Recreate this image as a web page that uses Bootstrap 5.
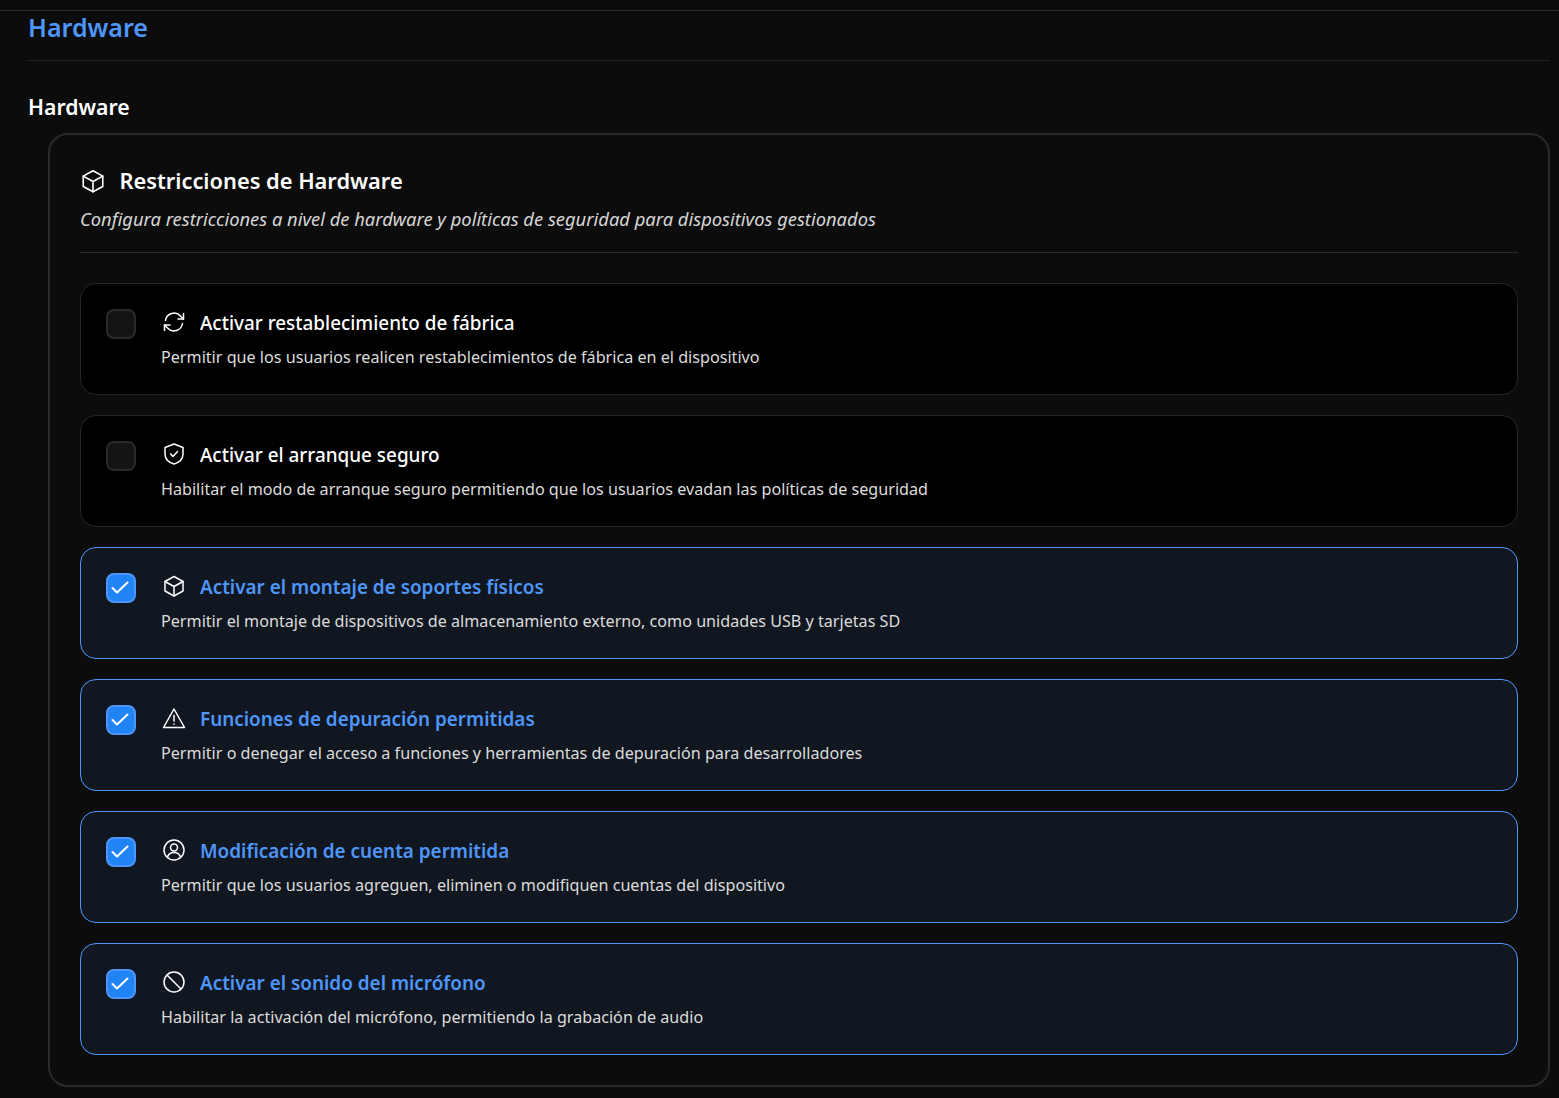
<!DOCTYPE html>
<html lang="es">
<head>
<meta charset="utf-8">
<title>Hardware</title>
<link href="https://cdn.jsdelivr.net/npm/bootstrap@5.3.0/dist/css/bootstrap.min.css" rel="stylesheet">
<style>
html,body{background:#0c0c0c;font-family:"Noto Sans",sans-serif;color:#fff;overflow:hidden}
.page-top{height:11px;border-bottom:1px solid #2a2a2a}
.page-wrap{padding:0 9.5px 0 28px}
.page-head{height:50px;border-bottom:1px solid #222;margin:0}
.page-title{font-size:25px;font-weight:600;color:#4e96fa;line-height:32px;margin:0}
.sec-title{font-size:21.2px;font-weight:600;line-height:28px;margin:32px 0 12px;color:#fff}
.panel{margin-left:20px;border:2px solid #2a2a2a;border-radius:20px;padding:30px;height:954px}
.panel-icon{width:26px;height:26px;flex:none;margin-right:13.5px;margin-top:-1px}
.panel-title{font-size:21.8px;font-weight:600;line-height:32px;margin:0}
.panel-sub{font-size:18.35px;font-style:italic;color:#d6d6d6;line-height:26px;margin:9px 0 0}
.panel-rule{border-top:1px solid #2a2a2a;margin:20px 0 30px}
.opt-list{gap:20px}
.opt{background:#000;border:1px solid #262626;border-radius:16px;padding:25px;height:112px;gap:25px}
.opt.on{background:#111720;border-color:#4e96fa}
.opt-box{width:30px;height:30px;flex:none;border:2px solid #2a2a2a;background:#141414;border-radius:8px}
.opt.on .opt-box{background:#2184f4;border-color:#4e96fa}
.opt-box svg{display:block;width:26px;height:26px}
.opt-icon{width:24px;height:24px;flex:none;margin:0 14.5px 3px .5px}
.opt-title{font-size:18.9px;font-weight:500;line-height:28px;color:#fff}
.opt.on .opt-title{color:#4e96fa;font-weight:600}
.opt-desc{font-size:16.15px;line-height:22px;color:#dcdcdc;margin-top:9.4px}
svg.ln{fill:none;stroke:#fff;stroke-width:1.5;stroke-linecap:round;stroke-linejoin:round}
svg.tick{stroke-width:2}
</style>
</head>
<body>
<div class="page-top"></div>
<div class="page-wrap">
  <div class="page-head"><h1 class="page-title">Hardware</h1></div>
  <h2 class="sec-title">Hardware</h2>
  <section class="panel">
    <div class="d-flex align-items-center">
      <svg class="panel-icon ln" viewBox="0 0 24 24"><path d="M12 2.500l9 5v9.500l-9 5-9-5V7.500z"/><path d="M3 7.500l9 5 9-5M12 12.500V22"/></svg>
      <h3 class="panel-title">Restricciones de Hardware</h3>
    </div>
    <p class="panel-sub">Configura restricciones a nivel de hardware y políticas de seguridad para dispositivos gestionados</p>
    <div class="panel-rule"></div>
    <div class="d-flex flex-column opt-list">
      <div class="opt d-flex">
        <div class="opt-box"></div>
        <div>
          <div class="d-flex align-items-center"><svg class="opt-icon ln" viewBox="0 0 24 24"><path d="M3.500 10.500A8.700 8.700 0 0 1 18.500 6L21.500 9"/><path d="M21.500 3.500V9H16"/><path d="M20.500 13.500A8.700 8.700 0 0 1 5.500 18L2.500 15"/><path d="M2.500 20.500V15H8"/></svg><span class="opt-title">Activar restablecimiento de fábrica</span></div>
          <div class="opt-desc">Permitir que los usuarios realicen restablecimientos de fábrica en el dispositivo</div>
        </div>
      </div>
      <div class="opt d-flex">
        <div class="opt-box"></div>
        <div>
          <div class="d-flex align-items-center"><svg class="opt-icon ln" viewBox="0 0 24 24"><path d="M12 2l9 3.500v6.500c0 5-3.700 8.400-9 10-5.300-1.600-9-5-9-10V5.500z"/><path d="M8.500 12l2.500 2.500 4.500-5"/></svg><span class="opt-title">Activar el arranque seguro</span></div>
          <div class="opt-desc">Habilitar el modo de arranque seguro permitiendo que los usuarios evadan las políticas de seguridad</div>
        </div>
      </div>
      <div class="opt on d-flex">
        <div class="opt-box"><svg class="ln tick" viewBox="0 0 26 26"><path d="M4.500 13l4.500 4.500 10.500-10"/></svg></div>
        <div>
          <div class="d-flex align-items-center"><svg class="opt-icon ln" viewBox="0 0 24 24"><path d="M12 2.500l9 5v9.500l-9 5-9-5V7.500z"/><path d="M3 7.500l9 5 9-5M12 12.500V22"/></svg><span class="opt-title">Activar el montaje de soportes físicos</span></div>
          <div class="opt-desc">Permitir el montaje de dispositivos de almacenamiento externo, como unidades USB y tarjetas SD</div>
        </div>
      </div>
      <div class="opt on d-flex">
        <div class="opt-box"><svg class="ln tick" viewBox="0 0 26 26"><path d="M4.500 13l4.500 4.500 10.500-10"/></svg></div>
        <div>
          <div class="d-flex align-items-center"><svg class="opt-icon ln" viewBox="0 0 24 24"><path d="M12 3L1.500 21.500h21z"/><path d="M12 9.500v5.500M12 18v.3"/></svg><span class="opt-title">Funciones de depuración permitidas</span></div>
          <div class="opt-desc">Permitir o denegar el acceso a funciones y herramientas de depuración para desarrolladores</div>
        </div>
      </div>
      <div class="opt on d-flex">
        <div class="opt-box"><svg class="ln tick" viewBox="0 0 26 26"><path d="M4.500 13l4.500 4.500 10.500-10"/></svg></div>
        <div>
          <div class="d-flex align-items-center"><svg class="opt-icon ln" viewBox="0 0 24 24"><circle cx="12" cy="12" r="10"/><circle cx="12" cy="9.500" r="3.500"/><path d="M5.500 19c1-3 3.500-4.500 6.500-4.500s5.500 1.500 6.500 4.500"/></svg><span class="opt-title">Modificación de cuenta permitida</span></div>
          <div class="opt-desc">Permitir que los usuarios agreguen, eliminen o modifiquen cuentas del dispositivo</div>
        </div>
      </div>
      <div class="opt on d-flex">
        <div class="opt-box"><svg class="ln tick" viewBox="0 0 26 26"><path d="M4.500 13l4.500 4.500 10.500-10"/></svg></div>
        <div>
          <div class="d-flex align-items-center"><svg class="opt-icon ln" viewBox="0 0 24 24"><circle cx="12" cy="12" r="10"/><path d="M5 5l14 14"/></svg><span class="opt-title">Activar el sonido del micrófono</span></div>
          <div class="opt-desc">Habilitar la activación del micrófono, permitiendo la grabación de audio</div>
        </div>
      </div>
    </div>
  </section>
</div>
<script src="https://cdn.jsdelivr.net/npm/bootstrap@5.3.0/dist/js/bootstrap.bundle.min.js"></script>
</body>
</html>
